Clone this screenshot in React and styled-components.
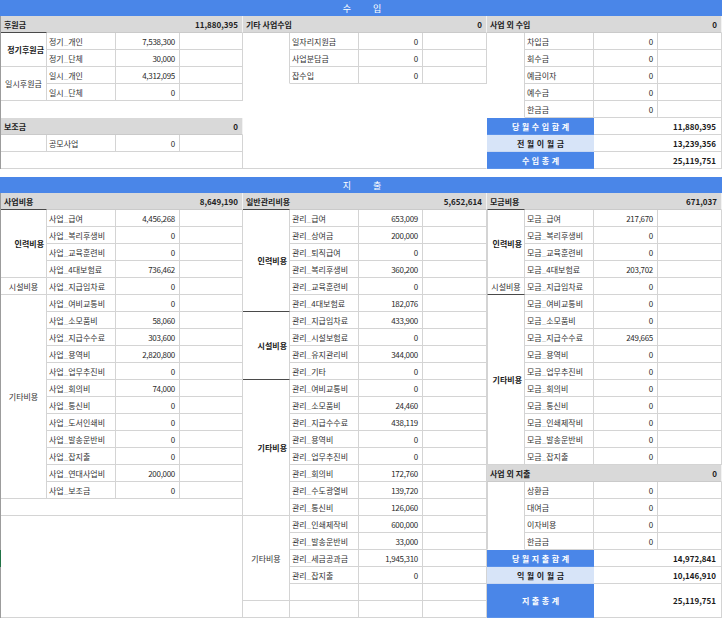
import styled, { createGlobalStyle } from "styled-components";

const BLUE = "#4a86e8";
const LIGHT = "#d7e4f8";
const GRID = "#d4d4d4";
const DARK = "#4a4a4a";

const GlobalStyle = createGlobalStyle`
  body {
    margin: 0;
    background: #fff;
    font-family: "Noto Sans CJK KR", "Noto Sans", sans-serif;
    font-size: 8px;
    color: #262626;
  }
`;

const income = {
  left: [
    { head: "후원금", total: "11,880,395" },
    {
      groups: [
        { label: "정기후원금", bold: true, top: true, items: [["정기_개인", "7,538,300"], ["정기_단체", "30,000"]] },
        { label: "일시후원금", items: [["일시_개인", "4,312,095"], ["일시_단체", "0"]] },
      ],
    },
  ],
};

const spend1 = [
  { label: "인력비용", bold: true, top: true, items: [["사업_급여", "4,456,268"], ["사업_복리후생비", "0"], ["사업_교육훈련비", "0"], ["사업_4대보험료", "736,462"]] },
  { label: "시설비용", items: [["사업_지급임차료", "0"]] },
  {
    label: "기타비용",
    items: [
      ["사업_여비교통비", "0"], ["사업_소모품비", "58,060"], ["사업_지급수수료", "303,600"], ["사업_용역비", "2,820,800"],
      ["사업_업무추진비", "0"], ["사업_회의비", "74,000"], ["사업_통신비", "0"], ["사업_도서인쇄비", "0"],
      ["사업_발송운반비", "0"], ["사업_잡지출", "0"], ["사업_연대사업비", "200,000"], ["사업_보조금", "0"],
    ],
  },
];

const spend2 = [
  {
    label: "인력비용", bold: true, top: true, bottom: true,
    items: [["관리_급여", "653,009"], ["관리_상여금", "200,000"], ["관리_퇴직급여", "0"], ["관리_복리후생비", "360,200"], ["관리_교육훈련비", "0"], ["관리_4대보험료", "182,076"]],
  },
  {
    label: "시설비용", bold: true, bottom: true,
    items: [["관리_지급임차료", "433,900"], ["관리_시설보험료", "0"], ["관리_유지관리비", "344,000"], ["관리_기타", "0"]],
  },
  {
    label: "기타비용", bold: true,
    items: [
      ["관리_여비교통비", "0"], ["관리_소모품비", "24,460"], ["관리_지급수수료", "438,119"], ["관리_용역비", "0"],
      ["관리_업무추진비", "0"], ["관리_회의비", "172,760"], ["관리_수도광열비", "139,720"], ["관리_통신비", "126,060"],
    ],
  },
  {
    label: "기타비용",
    items: [["관리_인쇄제작비", "600,000"], ["관리_발송운반비", "33,000"], ["관리_세금공과금", "1,945,310"], ["관리_잡지출", "0"], ["", ""]],
  },
  { label: "", items: [["", ""]] },
];

const spend3 = [
  { label: "인력비용", bold: true, top: true, items: [["모금_급여", "217,670"], ["모금_복리후생비", "0"], ["모금_교육훈련비", "0"], ["모금_4대보험료", "203,702"]] },
  { label: "시설비용", bottom: true, items: [["모금_지급임차료", "0"]] },
  {
    label: "기타비용", bold: true,
    items: [
      ["모금_여비교통비", "0"], ["모금_소모품비", "0"], ["모금_지급수수료", "249,665"], ["모금_용역비", "0"], ["모금_업무추진비", "0"],
      ["모금_회의비", "0"], ["모금_통신비", "0"], ["모금_인쇄제작비", "0"], ["모금_발송운반비", "0"], ["모금_잡지출", "0"],
    ],
  },
];

function Name({ text }) {
  const parts = text.split("_");
  if (parts.length < 2) return <NameCell>{text}</NameCell>;
  return (
    <NameCell>
      {parts[0]}
      <Under>_</Under>
      {parts[1]}
    </NameCell>
  );
}

function Groups({ groups, left }) {
  return groups.map((g, i) => (
    <>
      <Group
        key={"g" + i}
        $span={g.items.length}
        $bold={g.bold}
        $top={g.top}
        $bottom={g.bottom}
        $left={left}
      >
        {g.label}
      </Group>
      {g.items.map(([n, v], j) => (
        <>
          <Name key={"n" + i + j} text={n} />
          <ValueCell key={"v" + i + j}>{v}</ValueCell>
          <BlankCell key={"b" + i + j} />
        </>
      ))}
    </>
  ));
}

function Plain({ items }) {
  return items.map(([n, v]) => (
    <>
      <Name key={"n" + n} text={n} />
      <ValueCell key={"v" + n}>{v}</ValueCell>
      <BlankCell key={"b" + n} />
    </>
  ));
}

function Sum({ label, value, light, span = 1 }) {
  return (
    <>
      <SumLabel $light={light} $span={span}>{label}</SumLabel>
      <SumValue $span={span}>{value}</SumValue>
    </>
  );
}

export default function App() {
  return (
    <>
      <GlobalStyle />
      <Sheet>
        <TitleBar>
          <span>수</span>
          <span>입</span>
        </TitleBar>
        <SectionRow>
          <Section $cols="46px 69px 64px 63px" $edge>
            <Head>
              <span>{income.left[0].head}</span>
              <span>{income.left[0].total}</span>
            </Head>
            <Groups groups={income.left[1].groups} />
            <EmptyRow />
            <Head>
              <span>보조금</span>
              <span>0</span>
            </Head>
            <Group $span={1} />
            <Plain items={[["공모사업", "0"]]} />
            <EmptyRow $lined />
          </Section>

          <Section $cols="47px 69px 64px 64px">
            <Head>
              <span>기타 사업수입</span>
              <span>0</span>
            </Head>
            <Group $span={3} $open />
            <Plain items={[["일자리지원금", "0"], ["사업분담금", "0"], ["잡수입", "0"]]} />
            <EmptyRow $span={5} $lined $noRight />
          </Section>

          <Section $cols="38px 69px 64px 64px">
            <Head>
              <span>사업 외 수입</span>
              <span>0</span>
            </Head>
            <Group $span={5} $open />
            <Plain items={[["차입금", "0"], ["회수금", "0"], ["예금이자", "0"], ["예수금", "0"], ["한금금", "0"]]} />
            <Sum label="당월수입합계" value="11,880,395" />
            <Sum label="전월이월금" value="13,239,356" light />
            <Sum label="수입총계" value="25,119,751" />
          </Section>
        </SectionRow>

        <TitleBar $gap>
          <span>지</span>
          <span>출</span>
        </TitleBar>
        <SectionRow>
          <Section $cols="46px 69px 64px 63px" $edge>
            <Head>
              <span>사업비용</span>
              <span>8,649,190</span>
            </Head>
            <Groups groups={spend1} />
            <EmptyRow $lined />
            <EmptyRow $span={6} $lined>
              <Marker />
            </EmptyRow>
          </Section>

          <Section $cols="47px 69px 64px 64px">
            <Head>
              <span>일반관리비용</span>
              <span>5,652,614</span>
            </Head>
            <Groups groups={spend2} />
          </Section>

          <Section $cols="38px 69px 64px 64px">
            <Head>
              <span>모금비용</span>
              <span>671,037</span>
            </Head>
            <Groups groups={spend3} left />
            <Head>
              <span>사업 외 지출</span>
              <span>0</span>
            </Head>
            <Group $span={4} $left $open />
            <Plain items={[["상환금", "0"], ["대여금", "0"], ["이자비용", "0"], ["한금금", "0"]]} />
            <Sum label="당월지출합계" value="14,972,841" />
            <Sum label="익월이월금" value="10,146,910" light />
            <Sum label="지출총계" value="25,119,751" span={2} />
          </Section>
        </SectionRow>
      </Sheet>
    </>
  );
}

const Sheet = styled.div`
  width: 722px;
  display: flex;
  flex-direction: column;
`;

const TitleBar = styled.div`
  height: 16px;
  margin-top: ${({ $gap }) => ($gap ? "8px" : "0")};
  background: ${BLUE};
  color: #fff;
  font-size: 9px;
  display: flex;
  align-items: center;
  justify-content: center;
  gap: 22px;
  padding-left: 2px;
`;

const SectionRow = styled.div`
  display: flex;
  align-items: flex-start;
`;

const Section = styled.div`
  display: grid;
  grid-template-columns: ${({ $cols }) => $cols};
  grid-auto-rows: 17px;
  border-left: ${({ $edge }) => ($edge ? "1px solid #9c9c9c" : "none")};
`;

const Head = styled.div`
  grid-column: 1 / -1;
  background: #d9d9d9;
  border-right: 1px solid #f2f2f2;
  border-bottom: 1px solid #cacaca;
  display: flex;
  align-items: center;
  justify-content: space-between;
  padding: 0 4px 0 3px;
  font-weight: 700;
  color: #1e1e1e;
`;

const Group = styled.div`
  grid-column: 1;
  grid-row: span ${({ $span }) => $span};
  display: flex;
  align-items: center;
  justify-content: ${({ $bold }) => ($bold ? "flex-end" : "center")};
  padding-right: ${({ $bold }) => ($bold ? "2px" : "0")};
  font-weight: ${({ $bold }) => ($bold ? 700 : 400)};
  color: ${({ $bold }) => ($bold ? "#1a1a1a" : "#333")};
  border-right: 1px solid ${GRID};
  border-bottom: 1px solid ${({ $bottom, $open }) => ($bottom ? DARK : $open ? "transparent" : GRID)};
  border-left: ${({ $left }) => ($left ? `1px solid ${GRID}` : "none")};
  ${({ $top }) => ($top ? `margin-top: -1px; border-top: 1px solid ${DARK};` : "")}
`;

const NameCell = styled.div`
  grid-column: 2;
  display: flex;
  align-items: center;
  padding-left: 2px;
  white-space: nowrap;
  overflow: hidden;
  color: #333;
  border-right: 1px solid ${GRID};
  border-bottom: 1px solid ${GRID};
`;

const Under = styled.span`
  color: #b5b5b5;
`;

const ValueCell = styled.div`
  grid-column: 3;
  display: flex;
  align-items: center;
  justify-content: flex-end;
  padding-right: 4px;
  letter-spacing: -0.3px;
  color: #2a2a2a;
  border-right: 1px solid ${GRID};
  border-bottom: 1px solid ${GRID};
`;

const BlankCell = styled.div`
  grid-column: 4;
  border-right: 1px solid ${GRID};
  border-bottom: 1px solid ${GRID};
`;

const EmptyRow = styled.div`
  position: relative;
  grid-column: 1 / -1;
  grid-row: span ${({ $span }) => $span || 1};
  border-bottom: 1px solid ${({ $lined }) => ($lined ? GRID : "transparent")};
  border-right: 1px solid ${({ $lined, $noRight }) => ($lined && !$noRight ? GRID : "transparent")};
`;

const Marker = styled.div`
  position: absolute;
  left: -1px;
  top: 34px;
  width: 1px;
  height: 17px;
  background: #217346;
`;

const SumLabel = styled.div`
  grid-column: 1 / span 2;
  grid-row: span ${({ $span }) => $span};
  background: ${({ $light }) => ($light ? LIGHT : BLUE)};
  color: ${({ $light }) => ($light ? "#1a1a1a" : "#fff")};
  font-weight: 700;
  letter-spacing: 2.6px;
  padding-left: 2.6px;
  display: flex;
  align-items: center;
  justify-content: center;
  border-bottom: 1px solid ${({ $light }) => ($light ? "#c9d8f2" : "#5b92ea")};
`;

const SumValue = styled.div`
  grid-column: 3 / span 2;
  grid-row: span ${({ $span }) => $span};
  display: flex;
  align-items: center;
  justify-content: flex-end;
  padding-right: 5px;
  font-weight: 700;
  color: #1a1a1a;
  border-right: 1px solid ${GRID};
  border-bottom: 1px solid ${GRID};
`;
